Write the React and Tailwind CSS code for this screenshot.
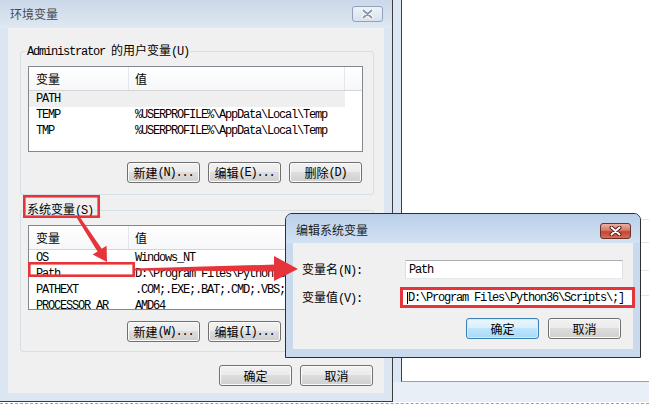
import React from "react";

const mono = "font-['Liberation_Mono','Noto_Sans_CJK_SC',monospace] text-[12px] tracking-[-1.2px] leading-[16px] text-black";

const Zh = ({ children, className = "" }) => (
  <span className={`font-['Noto_Sans_CJK_SC','Noto_Sans',sans-serif] text-[12px] tracking-normal ${className}`}>{children}</span>
);

const Btn = ({ children, primary }) => (
  <div
    className={`flex h-[21px] w-[73px] items-center justify-center rounded-[3px] border ${
      primary
        ? "border-[#3c7fb1] bg-[linear-gradient(#eaf6fd,#d9f0fc_45%,#bee6fd_50%,#a7d9f5)] shadow-[inset_0_0_0_1px_#cdeefe]"
        : "border-[#707070] bg-[linear-gradient(#f2f2f2,#ebebeb_45%,#dddddd_50%,#cfcfcf)] shadow-[inset_0_0_0_1px_#fbfbfb]"
    }`}
  >
    {children}
  </div>
);

const CloseBtn = ({ active }) => (
  <div
    className={`flex h-[16px] w-[31px] items-center justify-center rounded-[3px] border ${
      active
        ? "border-[#6d2f27] bg-[linear-gradient(#eab0a2,#d8796a_45%,#c5452f_55%,#d46e58)]"
        : "border-[#8fa2ba] bg-[linear-gradient(#eef2f7,#d9e2ed)]"
    }`}
  >
    <svg width="13" height="10" viewBox="0 0 13 10">
      <path d="M2.5 1.5 L10.5 8.5 M10.5 1.5 L2.5 8.5" stroke={active ? "#5a1d14" : "#ffffff"} strokeWidth="4" strokeLinecap="round" />
      <path d="M2.5 1.5 L10.5 8.5 M10.5 1.5 L2.5 8.5" stroke={active ? "#ffffff" : "#8c98a8"} strokeWidth="2" strokeLinecap="round" />
    </svg>
  </div>
);

const ListView = ({ rows, selected = -1, className = "" }) => (
  <div className={`w-[335px] overflow-hidden border border-[#828790] bg-white ${className}`}>
    <div className="flex h-[24px] border-b border-[#d5d5d5] bg-linear-to-b from-white to-[#f6f7f9]">
      <div className="flex w-[100px] items-center border-r border-[#e3e6ea] pl-[7px]">
        <Zh>变量</Zh>
      </div>
      <div className="flex w-[216px] items-center border-r border-[#e3e6ea] pl-[6px]">
        <Zh>值</Zh>
      </div>
    </div>
    {rows.map(([k, v], i) => (
      <div key={k} className={`flex h-[16px] w-[316px] items-center ${i === selected ? "bg-[#efefef]" : ""}`}>
        <div className="w-[100px] overflow-hidden whitespace-nowrap pl-[7px]">{k}</div>
        <div className="w-[216px] overflow-hidden whitespace-nowrap pl-[6px]">{v}</div>
      </div>
    ))}
  </div>
);

const userRows = [
  ["PATH", ""],
  ["TEMP", "%USERPROFILE%\\AppData\\Local\\Temp"],
  ["TMP", "%USERPROFILE%\\AppData\\Local\\Temp"],
];

const sysRows = [
  ["OS", "Windows_NT"],
  ["Path", "D:\\Program Files\\Python36\\Scripts\\;D:\\Program Files\\Python36"],
  ["PATHEXT", ".COM;.EXE;.BAT;.CMD;.VBS;.VBE;.JS;.JSE"],
  ["PROCESSOR_AR", "AMD64"],
];

export default function App() {
  return (
    <div className={`relative flex h-[406px] w-[649px] flex-col overflow-hidden bg-white ${mono}`}>
      <div className="flex h-[402px] shrink-0">
        {/* 环境变量 window */}
        <div className="flex h-[402px] w-[393px] shrink-0 flex-col border-r border-b border-[#3d3d3d] bg-[#dce6f2]">
          <div className="flex h-[28px] shrink-0 items-start justify-between bg-[linear-gradient(#cbd8e8,#dfe8f3)]">
            <Zh className="mt-[6px] ml-[10px] leading-[16px] text-[#4a4a4a]">环境变量</Zh>
            <div className="mt-[6px] mr-[9px]">
              <CloseBtn />
            </div>
          </div>
          <div className="mx-[8px] h-[365px] bg-[#f0f0f0] pt-[14px] pl-[12px]">
            <fieldset className="w-[354px] rounded-[3px] border border-[#d5dfe5] pr-[10px] pb-[11px] pl-[7px]">
              <legend className="-ml-[2px] px-[1px] leading-[16px]">
                Administrator <Zh>的用户变量</Zh>(U)
              </legend>
              <ListView rows={userRows} selected={0} className="mt-[6px] h-[86px]" />
              <div className="mt-[10px] flex justify-end gap-[8px] pr-[1px]">
                <Btn><Zh>新建</Zh>(N)...</Btn>
                <Btn><Zh>编辑</Zh>(E)...</Btn>
                <Btn><Zh>删除</Zh>(D)</Btn>
              </div>
            </fieldset>
            <fieldset className="mt-[6px] w-[354px] rounded-[3px] border border-[#d5dfe5] pr-[10px] pb-[9px] pl-[7px]">
              <legend className="-ml-[2px] px-[1px] leading-[16px]">
                <Zh>系统变量</Zh>(S)
              </legend>
              <ListView rows={sysRows} className="mt-[6px] h-[85px]" />
              <div className="mt-[11px] flex justify-end gap-[8px] pr-[1px]">
                <Btn><Zh>新建</Zh>(W)...</Btn>
                <Btn><Zh>编辑</Zh>(I)...</Btn>
                <Btn><Zh>删除</Zh>(L)</Btn>
              </div>
            </fieldset>
            <div className="mt-[13px] flex justify-end gap-[8px] pr-[11px]">
              <Btn><Zh>确定</Zh></Btn>
              <Btn><Zh>取消</Zh></Btn>
            </div>
          </div>
        </div>

        {/* window behind */}
        <div className="flex h-[402px] flex-1 flex-col">
          <div className="flex flex-1">
            <div className="w-[8px] bg-[#dde7f3]" />
            <div className="flex flex-1 flex-col border-b border-l border-b-[#a0a0a0] border-l-[#3d3d3d] bg-white pt-[219px]">
              <div className="h-[24px] border-y border-[#e1e6ed]" />
              <div className="h-[28px] border-b border-[#e1e6ed]" />
              <div className="h-[25px] border-b border-[#e1e6ed]" />
            </div>
          </div>
          <div className="h-[20px] bg-[#e9eff7]" />
        </div>
      </div>
      <div className="h-[4px] pt-[1px]">
        <div className="border-t border-dashed border-[#9aa3ad]" />
      </div>

      {/* 编辑系统变量 dialog */}
      <div className="absolute top-[213px] left-[285px] flex h-[145px] w-[356px] flex-col rounded-t-[7px] border border-[#2f2f2f] bg-[#c9daef]">
        <div className="flex h-[29px] shrink-0 items-start justify-between rounded-t-[6px] bg-[linear-gradient(#b9cfe9,#d3e2f3)]">
          <Zh className="mt-[8px] ml-[10px] leading-[16px] text-[#1c1c1c]">编辑系统变量</Zh>
          <div className="mt-[9px] mr-[9px]">
            <CloseBtn active />
          </div>
        </div>
        <div className="mx-[7px] h-[106px] bg-[#f0f0f0] pt-[17px] pr-[10px] pl-[9px]">
          <div className="flex h-[19px] items-center">
            <div className="w-[103px]">
              <Zh>变量名</Zh>(N):
            </div>
            <div className="flex h-[19px] flex-1 items-center border border-[#abadb3] border-x-[#dbdfe6] border-b-[#e3e9ef] bg-white pl-[3px]">
              Path
            </div>
          </div>
          <div className="mt-[9px] flex h-[19px] items-center">
            <div className="w-[103px]">
              <Zh>变量值</Zh>(V):
            </div>
            <div className="-mr-[12px] -ml-[5px] flex h-[21px] flex-1 items-center overflow-hidden whitespace-nowrap border-[3px] border-[#e6353a] bg-white pl-[4px]">
              <span className="h-[12px] w-[1px] bg-black" />
              {"D:\\Program Files\\Python36\\Scripts\\;]"}
            </div>
          </div>
          <div className="mt-[11px] mr-[2px] flex justify-end gap-[9px]">
            <Btn primary><Zh>确定</Zh></Btn>
            <Btn><Zh>取消</Zh></Btn>
          </div>
        </div>
      </div>

      {/* annotations */}
      <svg className="pointer-events-none absolute top-0 left-0" width="649" height="406" viewBox="0 0 649 406">
        <g fill="none" stroke="#e6353a" strokeWidth="2.6">
          <rect x="24.3" y="196.3" width="74.4" height="20.4" />
          <rect x="29.3" y="263.3" width="104.4" height="12.4" />
        </g>
        <g fill="#e6353a">
          <polygon points="79.3,216.3 101.7,248.8 106.6,245.7 107,262 92.6,254.4 97.5,251.4 76.7,217.7" />
          <polygon points="134,268.6 276,264.5 276,271.5 134,270.6" />
          <polygon points="274,256 298,269 274,281" />
        </g>
      </svg>
    </div>
  );
}
